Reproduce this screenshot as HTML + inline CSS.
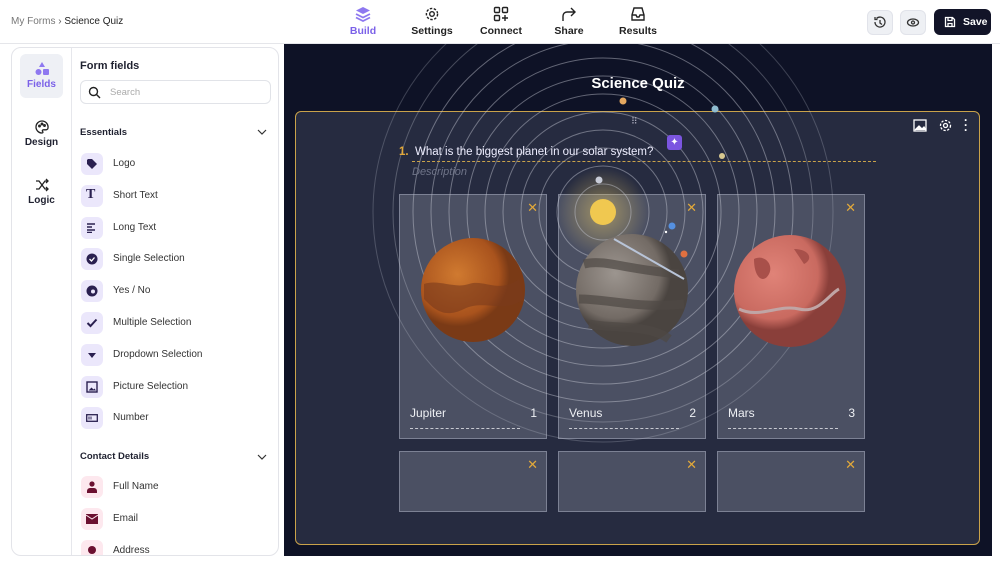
<!DOCTYPE html>
<html><head><meta charset="utf-8"><style>
*{box-sizing:border-box;margin:0;padding:0}
body{width:1000px;height:565px;overflow:hidden;background:#fff;font-family:"Liberation Sans",sans-serif;position:relative;color:#1f2130}
.abs{position:absolute}
.nav{position:absolute;top:6px;width:70px;text-align:center;font-size:10.5px;font-weight:bold;color:#222}
.nav svg{display:block;margin:0 auto 3px}
.btn{position:absolute;top:10px;width:26px;height:25px;border-radius:6px;background:#eef0f4;border:1px solid #e1e3ea}
.item{position:absolute;left:81px;font-size:10px;color:#333;height:22px}
.item .ic{position:absolute;left:0;top:0;width:22px;height:22px;border-radius:6px;background:#ebe7fb}
.item span{position:absolute;left:32px;top:5px;white-space:nowrap}
.card{position:absolute;background:#4b5063;border:1px solid #7c8194}
.x{position:absolute;right:9px;top:6px;color:#e2a93a;font-size:13px}
.lbl{position:absolute;left:11px;right:10px;bottom:19px;color:#eef0f4;font-size:12px}
.lbl b{float:right;font-weight:normal}
.dash{position:absolute;left:11px;width:110px;bottom:10px;border-top:1px dashed #c8cad2}
</style></head><body>
<div class="abs" style="left:11px;top:16px;font-size:10px;color:#777">My Forms <span style="color:#555">›</span> <span style="color:#222">Science Quiz</span></div>

<div class="nav" style="left:328px;color:#7b61e8"><svg width="16" height="16" viewBox="0 0 16 16"><path d="M8 1L15 4.5 8 8 1 4.5Z" fill="#8e78f0"/><path d="M1 8l7 3.5L15 8M1 11.5l7 3.5 7-3.5" stroke="#8e78f0" stroke-width="1.8" fill="none"/></svg>Build</div>
<div class="nav" style="left:397px"><svg width="16" height="16" viewBox="0 0 16 16"><circle cx="8" cy="8" r="2.3" fill="none" stroke="#222" stroke-width="1.4"/><circle cx="8" cy="8" r="5.6" fill="none" stroke="#222" stroke-width="1.4" stroke-dasharray="2.5 1.5"/></svg>Settings</div>
<div class="nav" style="left:466px"><svg width="16" height="16" viewBox="0 0 16 16" fill="none" stroke="#222" stroke-width="1.4"><rect x="1.5" y="1.5" width="5" height="5" rx="1"/><rect x="9.5" y="1.5" width="5" height="5" rx="1"/><rect x="1.5" y="9.5" width="5" height="5" rx="1"/><path d="M12 9v6M9 12h6"/></svg>Connect</div>
<div class="nav" style="left:534px"><svg width="16" height="16" viewBox="0 0 16 16" fill="none" stroke="#222" stroke-width="1.4"><path d="M2 15V10a4 4 0 0 1 4-4h8M10 2l4 4-4 4"/></svg>Share</div>
<div class="nav" style="left:603px"><svg width="16" height="16" viewBox="0 0 16 16" fill="none" stroke="#222" stroke-width="1.4"><path d="M2 9l2-7h8l2 7v5H2zM2 9h4l1 2h2l1-2h4"/></svg>Results</div>

<div class="btn" style="left:867px"><svg width="24" height="23" viewBox="0 0 24 23" fill="none" stroke="#333" stroke-width="1.3"><path d="M7 11a5 5 0 1 0 1.5-3.5M7 6v2.5h2.5M12 9v3l2 1.5"/></svg></div>
<div class="btn" style="left:900px"><svg width="24" height="23" viewBox="0 0 24 23" fill="none" stroke="#333" stroke-width="1.3"><ellipse cx="12" cy="11.5" rx="5.5" ry="3.5"/><circle cx="12" cy="11.5" r="1.5"/></svg></div>
<div class="abs" style="left:934px;top:9px;width:57px;height:26px;border-radius:6px;background:#121428;color:#fff;font-size:10.5px;font-weight:bold;padding:7px 0 0 29px">Save<svg class="abs" style="left:10px;top:7px" width="12" height="12" viewBox="0 0 12 12" fill="none" stroke="#fff" stroke-width="1.3"><path d="M1.5 1.5h7l2 2v7h-9z M4 1.5v3h4v-3M4 10.5V7.5h4v3"/></svg></div>

<div class="abs" style="left:0;top:43px;width:1000px;height:1px;background:#e5e6ea"></div>

<div class="abs" style="left:11px;top:47px;width:268px;height:509px;border:1px solid #e3e4e9;border-radius:10px;overflow:hidden;background:#fff">
 <div class="abs" style="left:59px;top:0;width:1px;height:509px;background:#e6e7ec"></div>
 <div class="abs" style="left:8px;top:6px;width:43px;height:44px;border-radius:6px;background:#eef0f5;text-align:center;color:#7b61e8;font-size:10px;font-weight:bold;padding-top:8px"><svg width="14" height="14" viewBox="0 0 14 14"><path d="M7 0L10 5H4Z" fill="#8e78f0"/><circle cx="3.5" cy="10" r="3" fill="#8e78f0"/><rect x="8" y="7" width="6" height="6" rx="1" fill="#8e78f0"/></svg><br>Fields</div>
 <div class="abs" style="left:8px;top:72px;width:43px;text-align:center;font-size:10px;font-weight:bold"><svg width="14" height="14" viewBox="0 0 14 14" fill="none" stroke="#222" stroke-width="1.3"><path d="M7 1a6 6 0 1 0 0 12c1 0 1.2-1 .6-1.6s-.2-1.6.8-1.6H11a2 2 0 0 0 2-2A6 6 0 0 0 7 1z"/><circle cx="4.5" cy="6" r=".8"/><circle cx="7" cy="4" r=".8"/><circle cx="9.5" cy="5.5" r=".8"/></svg><br>Design</div>
 <div class="abs" style="left:8px;top:130px;width:43px;text-align:center;font-size:10px;font-weight:bold"><svg width="14" height="14" viewBox="0 0 14 14" fill="none" stroke="#222" stroke-width="1.3"><path d="M1 3h3l6 8h3M1 11h3l6-8h3M11 1l2 2-2 2M11 9l2 2-2 2"/></svg><br>Logic</div>
 <div class="abs" style="left:68px;top:12px;font-size:11px;font-weight:bold">Form fields</div>
 <div class="abs" style="left:68px;top:32px;width:191px;height:24px;border:1px solid #e1e3e8;border-radius:6px;font-size:9.5px;color:#aaa;padding:6px 0 0 29px">Search<svg class="abs" style="left:7px;top:5px" width="13" height="13" viewBox="0 0 13 13" fill="none" stroke="#222" stroke-width="1.4"><circle cx="5.5" cy="5.5" r="4"/><path d="M8.5 8.5l3.5 3.5"/></svg></div>
 <div class="abs" style="left:68px;top:79px;font-size:9.5px;font-weight:bold">Essentials</div>
 <svg class="abs" style="left:245px;top:81px" width="10" height="6" viewBox="0 0 10 6" fill="none" stroke="#333" stroke-width="1.2"><path d="M1 1l4 4 4-4"/></svg>
 <div class="abs" style="left:68px;top:403px;font-size:9.5px;font-weight:bold">Contact Details</div>
 <svg class="abs" style="left:245px;top:406px" width="10" height="6" viewBox="0 0 10 6" fill="none" stroke="#333" stroke-width="1.2"><path d="M1 1l4 4 4-4"/></svg>
</div>
<div class="item" style="top:153px"><div class="ic"></div><span>Logo</span><svg class="abs" style="left:5px;top:5px" width="12" height="12" viewBox="0 0 12 12"><path d="M1 2v4l5 5 5-5-5-5H2z" fill="#2a2050"/></svg></div>
<div class="item" style="top:185px"><div class="ic"></div><span>Short Text</span><div class="abs" style="left:5px;top:2px;font:bold 14px 'Liberation Serif';color:#2a2050">T</div></div>
<div class="item" style="top:217px"><div class="ic"></div><span>Long Text</span><svg class="abs" style="left:6px;top:6px" width="10" height="10" viewBox="0 0 10 10" stroke="#2a2050" stroke-width="1.4"><path d="M0 1h8M0 4h5M0 7h8M0 9.5h5"/></svg></div>
<div class="item" style="top:248px"><div class="ic"></div><span>Single Selection</span><svg class="abs" style="left:5px;top:5px" width="12" height="12" viewBox="0 0 12 12"><circle cx="6" cy="6" r="5.5" fill="#2a2050"/><path d="M3.5 6l2 2 3-3.5" stroke="#fff" stroke-width="1.3" fill="none"/></svg></div>
<div class="item" style="top:280px"><div class="ic"></div><span>Yes / No</span><svg class="abs" style="left:5px;top:5px" width="12" height="12" viewBox="0 0 12 12"><circle cx="6" cy="6" r="5.5" fill="#2a2050"/><circle cx="7" cy="6.5" r="2" fill="#ebe7fb"/></svg></div>
<div class="item" style="top:312px"><div class="ic"></div><span>Multiple Selection</span><svg class="abs" style="left:5px;top:5px" width="12" height="12" viewBox="0 0 12 12"><path d="M1.5 6l3 3 6-6.5" stroke="#2a2050" stroke-width="2" fill="none"/></svg></div>
<div class="item" style="top:344px"><div class="ic"></div><span>Dropdown Selection</span><svg class="abs" style="left:7px;top:9px" width="8" height="5" viewBox="0 0 8 5"><path d="M0 0h8L4 5z" fill="#2a2050"/></svg></div>
<div class="item" style="top:376px"><div class="ic"></div><span>Picture Selection</span><svg class="abs" style="left:5px;top:5px" width="12" height="12" viewBox="0 0 12 12"><rect x="1" y="1" width="10" height="10" fill="none" stroke="#2a2050" stroke-width="1.4"/><path d="M2.5 9.5l3-3 2 2 1-1 1.5 2z" fill="#2a2050"/></svg></div>
<div class="item" style="top:407px"><div class="ic"></div><span>Number</span><svg class="abs" style="left:5px;top:7px" width="12" height="8" viewBox="0 0 12 8"><rect x=".7" y=".7" width="10.6" height="6.6" fill="none" stroke="#2a2050" stroke-width="1.3"/><path d="M3 2.5v3M5 2.5v3" stroke="#2a2050"/></svg></div>
<div class="item" style="top:476px"><div class="ic" style="background:#fde8ee"></div><span>Full Name</span><svg class="abs" style="left:6px;top:5px" width="10" height="12" viewBox="0 0 10 12"><circle cx="5" cy="3" r="2.6" fill="#6b1030"/><path d="M0 12v-2a3 3 0 0 1 3-3h4a3 3 0 0 1 3 3v2z" fill="#6b1030"/></svg></div>
<div class="item" style="top:508px"><div class="ic" style="background:#fde8ee"></div><span>Email</span><svg class="abs" style="left:5px;top:6px" width="12" height="10" viewBox="0 0 12 10"><rect width="12" height="10" fill="#6b1030"/><path d="M0 1l6 4 6-4" stroke="#fde8ee" fill="none"/></svg></div>
<div class="abs" style="left:80px;top:540px;width:190px;height:15px;overflow:hidden"><div class="ic abs" style="left:1px;top:0;width:22px;height:22px;border-radius:6px;background:#fde8ee"></div><div class="abs" style="left:8px;top:6px;width:8px;height:8px;border-radius:50%;background:#6b1030"></div><div class="abs" style="left:33px;top:5px;font-size:10px;color:#333">Address</div></div>

<div class="abs" style="left:284px;top:44px;width:708px;height:512px;background:#0e1226;overflow:hidden">
 <div class="abs" style="left:11px;top:67px;width:685px;height:434px;background:#262b40;border:1px solid #c9a24a;border-radius:6px"></div>
 <div class="card" style="left:115px;top:150px;width:148px;height:245px"></div>
 <div class="card" style="left:274px;top:150px;width:148px;height:245px"></div>
 <div class="card" style="left:433px;top:150px;width:148px;height:245px"></div>
 <div class="card" style="left:115px;top:407px;width:148px;height:61px"></div>
 <div class="card" style="left:274px;top:407px;width:148px;height:61px"></div>
 <div class="card" style="left:433px;top:407px;width:148px;height:61px"></div>
 <svg class="abs" style="left:0;top:0" width="708" height="512">
  <defs><radialGradient id="glow"><stop offset="0" stop-color="#f5d36a" stop-opacity=".5"/><stop offset="1" stop-color="#f5d36a" stop-opacity="0"/></radialGradient>
  <radialGradient id="j" cx=".35" cy=".35"><stop offset="0" stop-color="#d07a30"/><stop offset=".8" stop-color="#a9531d"/><stop offset="1" stop-color="#7a3a16"/></radialGradient>
  <radialGradient id="v" cx=".35" cy=".35"><stop offset="0" stop-color="#9c958f"/><stop offset=".8" stop-color="#736b65"/><stop offset="1" stop-color="#4a4440"/></radialGradient>
  <radialGradient id="m" cx=".35" cy=".35"><stop offset="0" stop-color="#e08378"/><stop offset=".8" stop-color="#c96a60"/><stop offset="1" stop-color="#8a3f3a"/></radialGradient></defs>
  <circle cx="319" cy="168" r="45" fill="url(#glow)"/>
  <g fill="none" stroke="#c9ccd8" stroke-opacity=".45" stroke-width="1">
   <circle cx="319" cy="168" r="28"/><circle cx="319" cy="168" r="46"/><circle cx="319" cy="168" r="64"/><circle cx="319" cy="168" r="82"/><circle cx="319" cy="168" r="100"/><circle cx="319" cy="168" r="118"/><circle cx="319" cy="168" r="136"/><circle cx="319" cy="168" r="154"/><circle cx="319" cy="168" r="172"/><circle cx="319" cy="168" r="190"/><circle cx="319" cy="168" r="210" stroke-opacity=".3"/><circle cx="319" cy="168" r="230" stroke-opacity=".25"/>
  </g>
  <circle cx="319" cy="168" r="13" fill="#f0c850"/>
  <circle cx="339" cy="57" r="3.5" fill="#e5a860"/><circle cx="431" cy="65" r="3.5" fill="#8fbcd0"/><circle cx="315" cy="136" r="3.5" fill="#c8ccd8"/><circle cx="438" cy="112" r="3" fill="#d8c890"/>
  <circle cx="388" cy="182" r="3.5" fill="#5590e0"/><circle cx="400" cy="210" r="3.5" fill="#e07040"/><circle cx="382" cy="188" r="1.2" fill="#fff"/>
  <circle cx="189" cy="246" r="52" fill="url(#j)"/>
  <path d="M140 240c15-5 30 5 45 0s30 10 50-5l5 20c-20 15-40 0-60 10s-30 0-40 -10z" fill="#7a3a1c" opacity=".6"/>
  <circle cx="348" cy="246" r="56" fill="url(#v)"/>
  <path d="M300 220c20-5 40 5 95 10M295 255c30 0 60 10 105 5M305 280c25 5 60 0 80 15" stroke="#4f4845" stroke-width="9" fill="none" opacity=".7"/>
  <path d="M330 195l70 40" stroke="#b8c4d8" stroke-width="2"/>
  <circle cx="506" cy="247" r="56" fill="url(#m)"/>
  <path d="M455 265c20 10 40 -5 60 0s30-15 40-20" stroke="#c0a5a5" stroke-width="3" fill="none"/>
  <path d="M470 215c10-5 20 5 15 15s-15 5-15-15zM510 205c15 0 20 10 10 15" fill="#a8504a"/>
 </svg>
 <div class="abs" style="left:0;width:708px;top:31px;text-align:center;color:#fff;font-size:15px;font-weight:bold">Science Quiz</div>
 <div class="abs" style="left:347px;top:72px;color:#aab;font-size:9px;letter-spacing:-1px">⠿</div>
 <svg class="abs" style="left:629px;top:75px" width="14" height="13" viewBox="0 0 14 13" fill="none" stroke="#fff" stroke-width="1.3"><rect x="1" y="1" width="12" height="11"/><path d="M2 11l4-4 3 3 2-2 2 3" fill="#fff"/></svg>
 <svg class="abs" style="left:655px;top:75px" width="13" height="13" viewBox="0 0 13 13" fill="none" stroke="#fff" stroke-width="1.3"><circle cx="6.5" cy="6.5" r="2"/><circle cx="6.5" cy="6.5" r="5" stroke-dasharray="2.3 1.5"/></svg>
 <div class="abs" style="left:680px;top:74px;color:#fff;font-size:12px;font-weight:bold;line-height:5px">·<br>·<br>·</div>
 <div class="abs" style="left:383px;top:91px;width:15px;height:15px;border-radius:3px;background:#7b55e0;color:#fff;font-size:10px;text-align:center;line-height:15px">✦</div>
 <div class="abs" style="left:115px;top:102px;font-size:11.5px;color:#eef"><span style="color:#e2a93a;font-weight:bold">1.</span>&nbsp; What is the biggest planet in our solar system?</div>
 <div class="abs" style="left:128px;top:117px;width:464px;border-top:1px dashed #c9a24a"></div>
 <div class="abs" style="left:128px;top:122px;font-size:11px;color:#6f7488;font-style:italic">Description</div>
 <div class="abs" style="left:115px;top:150px;width:148px;height:245px"><div class="x">✕</div><div class="lbl">Jupiter<b>1</b></div><div class="dash"></div></div>
 <div class="abs" style="left:274px;top:150px;width:148px;height:245px"><div class="x">✕</div><div class="lbl">Venus<b>2</b></div><div class="dash"></div></div>
 <div class="abs" style="left:433px;top:150px;width:148px;height:245px"><div class="x">✕</div><div class="lbl">Mars<b>3</b></div><div class="dash"></div></div>
 <div class="abs" style="left:115px;top:407px;width:148px;height:61px"><div class="x">✕</div></div>
 <div class="abs" style="left:274px;top:407px;width:148px;height:61px"><div class="x">✕</div></div>
 <div class="abs" style="left:433px;top:407px;width:148px;height:61px"><div class="x">✕</div></div>
</div>
</body></html>
